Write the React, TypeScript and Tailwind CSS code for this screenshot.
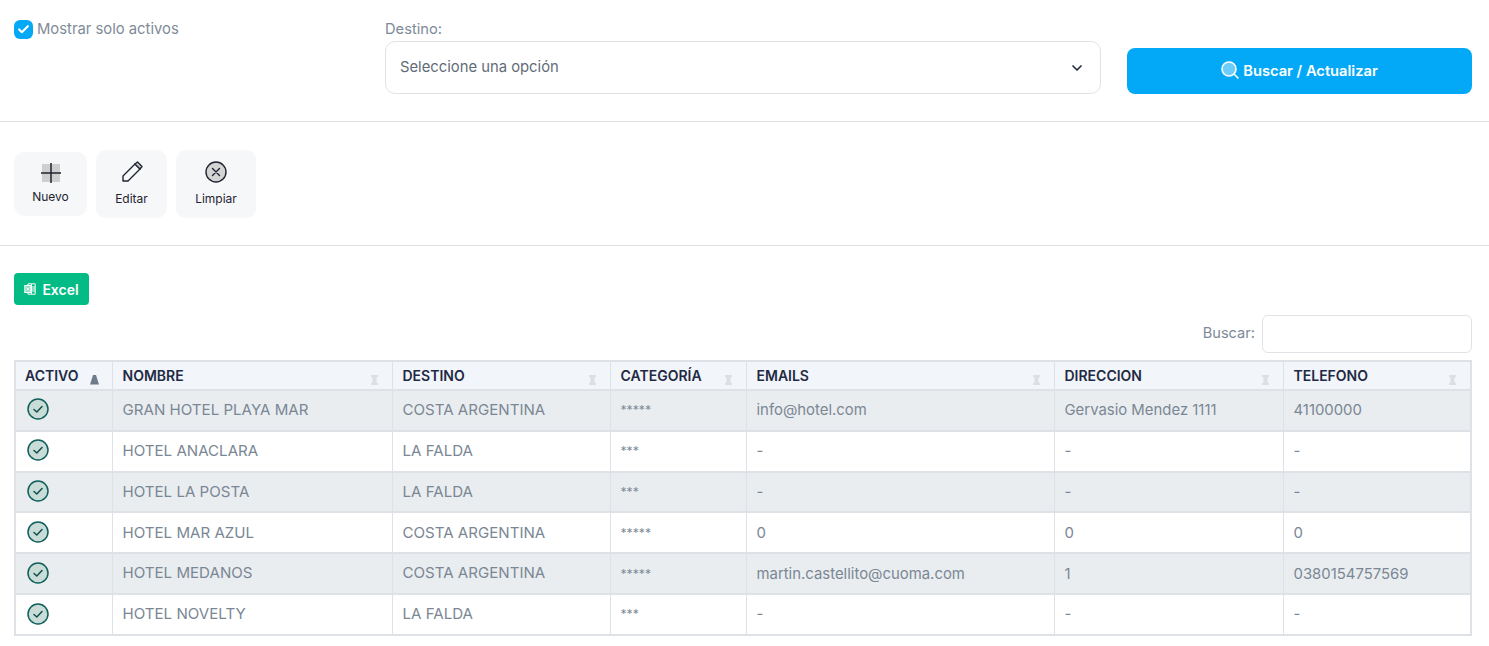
import { ChevronDown, Check } from "lucide-react";

const rows = [
  ["GRAN HOTEL PLAYA MAR", "COSTA ARGENTINA", "*****", "info@hotel.com", "Gervasio Mendez 1111", "41100000"],
  ["HOTEL ANACLARA", "LA FALDA", "***", "-", "-", "-"],
  ["HOTEL LA POSTA", "LA FALDA", "***", "-", "-", "-"],
  ["HOTEL MAR AZUL", "COSTA ARGENTINA", "*****", "0", "0", "0"],
  ["HOTEL MEDANOS", "COSTA ARGENTINA", "*****", "martin.castellito@cuoma.com", "1", "0380154757569"],
  ["HOTEL NOVELTY", "LA FALDA", "***", "-", "-", "-"],
];

const headers = ["NOMBRE", "DESTINO", "CATEGORÍA", "EMAILS", "DIRECCION", "TELEFONO"];

function SortIcon({ active }: { active?: boolean }) {
  return (
    <svg width="9" height="10" viewBox="0 0 9 10" className="absolute right-[13px] bottom-[4px]">
      {active ? (
        <path d="M4.5 0 L6 0 L9 9.5 H0 L3 0 Z" fill="#6f7a8a" />
      ) : (
        <path d="M1 0 H8 V1.5 L6.5 3 V7 L8 8.5 V10 H1 V8.5 L2.5 7 V3 L1 1.5 Z" fill="#dcdfe4" />
      )}
    </svg>
  );
}

function StatusIcon() {
  return (
    <svg width="22" height="22" viewBox="0 0 22 22">
      <circle cx="11" cy="11" r="10" fill="#c9dcd8" stroke="#0f5f5c" strokeWidth="1.5" />
      <path d="M7 11.5 L9.8 14 L15 8.5" fill="none" stroke="#0f4f4c" strokeWidth="1.5" strokeLinecap="round" strokeLinejoin="round" />
    </svg>
  );
}

function ToolButton({ label, className, children, labelClass }: { label: string; className: string; children: React.ReactNode; labelClass: string }) {
  return (
    <button className={`flex flex-col items-center rounded-[10px] bg-[#f6f7f9] ${className}`}>
      {children}
      <span className={`text-[12px] leading-[16px] text-[#1f2430] ${labelClass}`}>{label}</span>
    </button>
  );
}

export default function App() {
  return (
    <div className="h-[646px] overflow-hidden bg-white font-['Inter','Liberation_Sans',sans-serif] text-[#7b8794]">
      <div className="flex h-[122px] border-b border-[#e2e2e2] pl-[14px] pr-[17px]">
        <label className="mt-[19px] flex h-[20px] w-[371px] items-center gap-[4px]">
          <span className="mt-[1px] flex h-[19px] w-[19px] items-center justify-center rounded-[6px] bg-[#03a9f7]">
            <Check size={13} strokeWidth={4} className="text-white" />
          </span>
          <span className="text-[14.8px] text-[#7e8a97]">Mostrar solo activos</span>
        </label>
        <div className="w-[716px]">
          <div className="mt-[19px] text-[14.7px] leading-[20px] text-[#7e8a97]">Destino:</div>
          <div className="mt-[2px] flex h-[53px] items-center justify-between rounded-[10px] border border-[#dfe3e8] pl-[14px] pr-[15px] text-[14.8px] text-[#5f6b78]">
            <span className="mb-[1px]">Seleccione una opción</span>
            <ChevronDown size={16} strokeWidth={2.5} className="text-[#1f2937]" />
          </div>
        </div>
        <button className="mt-[48px] ml-[26px] flex h-[46px] flex-1 items-center justify-center gap-[4px] rounded-[8px] bg-[#03a9f7] text-[14.7px] font-semibold text-white">
          <svg width="18" height="18" viewBox="0 0 18 18" className="mb-[3px]" fill="#6cccfa" stroke="white" strokeWidth="1.6" strokeLinecap="round">
            <circle cx="8" cy="8" r="7" />
            <path d="M13 13 L17 17" />
          </svg>
          Buscar / Actualizar
        </button>
      </div>

      <div className="flex h-[124px] items-start gap-[9px] border-b border-[#e2e2e2] pl-[14px] pt-[28px]">
        <ToolButton label="Nuevo" labelClass="mt-[6px]" className="mt-[2px] h-[64px] w-[73px] pt-[11px]">
          <svg width="20" height="20" viewBox="0 0 20 20">
            <rect x="1" y="1" width="18" height="18" fill="#cfcfcf" />
            <path d="M10 0 V20 M0 10 H20" stroke="#1f2430" strokeWidth="1.5" />
          </svg>
        </ToolButton>
        <ToolButton label="Editar" labelClass="mt-[8px]" className="h-[68px] w-[71px] pt-[11px]">
          <svg width="22" height="22" viewBox="0 0 22 22" fill="none" stroke="#1f2430" strokeWidth="1.4" strokeLinejoin="round">
            <path d="M2 15 L14 3 L19 8 L7 20 H2 Z" />
            <path d="M14 3 L16.5 1 L21 5.5 L19 8 Z" fill="#cfcfcf" />
          </svg>
        </ToolButton>
        <ToolButton label="Limpiar" labelClass="mt-[8px]" className="h-[68px] w-[80px] pt-[11px]">
          <svg width="22" height="22" viewBox="0 0 22 22" fill="none" stroke="#1f2430" strokeWidth="1.4" strokeLinecap="round">
            <circle cx="11" cy="11" r="10" fill="#d4d4d4" />
            <path d="M7.5 7.5 L14.5 14.5 M14.5 7.5 L7.5 14.5" />
          </svg>
        </ToolButton>
      </div>

      <div className="pl-[14px] pr-[17px] pt-[27px]">
        <button className="flex h-[32px] w-[75px] items-center justify-center gap-[6px] rounded-[4px] bg-[#03bb85] text-[14px] font-semibold text-white">
          <svg width="12" height="12" viewBox="0 0 12 12" fill="none" stroke="white" strokeWidth="1">
            <path d="M4 2 V0.8 H11.2 V11.2 H4 V10" />
            <path d="M7.5 1 V11 M7.5 4 H11 M7.5 6 H11 M7.5 8 H11" />
            <rect x="0.8" y="2.5" width="6" height="7" fill="#8fdcc3" />
            <path d="M2.6 4.5 L5 7.5 M5 4.5 L2.6 7.5" />
          </svg>
          Excel
        </button>

        <div className="mt-[10px] flex items-center justify-end gap-[7px]">
          <span className="text-[14.6px] text-[#7e8a97]">Buscar:</span>
          <div className="h-[38px] w-[210px] rounded-[6px] border border-[#dfe3e8]" />
        </div>

        <table className="mt-[7px] w-[1458px] table-fixed border-collapse border-2 border-[#dee2e6] text-[14.9px]">
          <colgroup>
            <col className="w-[97px]" />
            <col className="w-[280px]" />
            <col className="w-[218px]" />
            <col className="w-[136px]" />
            <col className="w-[308px]" />
            <col className="w-[229px]" />
            <col />
          </colgroup>
          <thead>
            <tr className="h-[29px] border-b-2 border-[#dee2e6] bg-[#f2f5f9] text-left text-[14px] text-[#1f2a44]">
              <th className="relative border-r border-[#dee2e6] pl-[9px] pr-0 font-semibold">
                ACTIVO
                <SortIcon active />
              </th>
              {headers.map((h) => (
                <th key={h} className="relative border-r border-[#dee2e6] pl-[10px] pr-[8px] font-semibold">
                  {h}
                  <SortIcon />
                </th>
              ))}
            </tr>
          </thead>
          <tbody>
            {rows.map((r, i) => (
              <tr key={r[0]} className={`h-[40.83px] border-b-2 border-[#dee2e6] ${i % 2 === 0 ? "bg-[#e9edf0]" : "bg-white"}`}>
                <td className="border-r border-[#dee2e6] px-[11px] pb-[2px]">
                  <StatusIcon />
                </td>
                {r.map((c, j) => (
                  <td key={j} className={`border-r border-[#dee2e6] pl-[10px] pr-[8px] ${j === 2 ? "text-[12.2px]" : j < 2 ? "text-[15.1px]" : ""}`}>
                    {c}
                  </td>
                ))}
              </tr>
            ))}
          </tbody>
        </table>
      </div>
    </div>
  );
}
